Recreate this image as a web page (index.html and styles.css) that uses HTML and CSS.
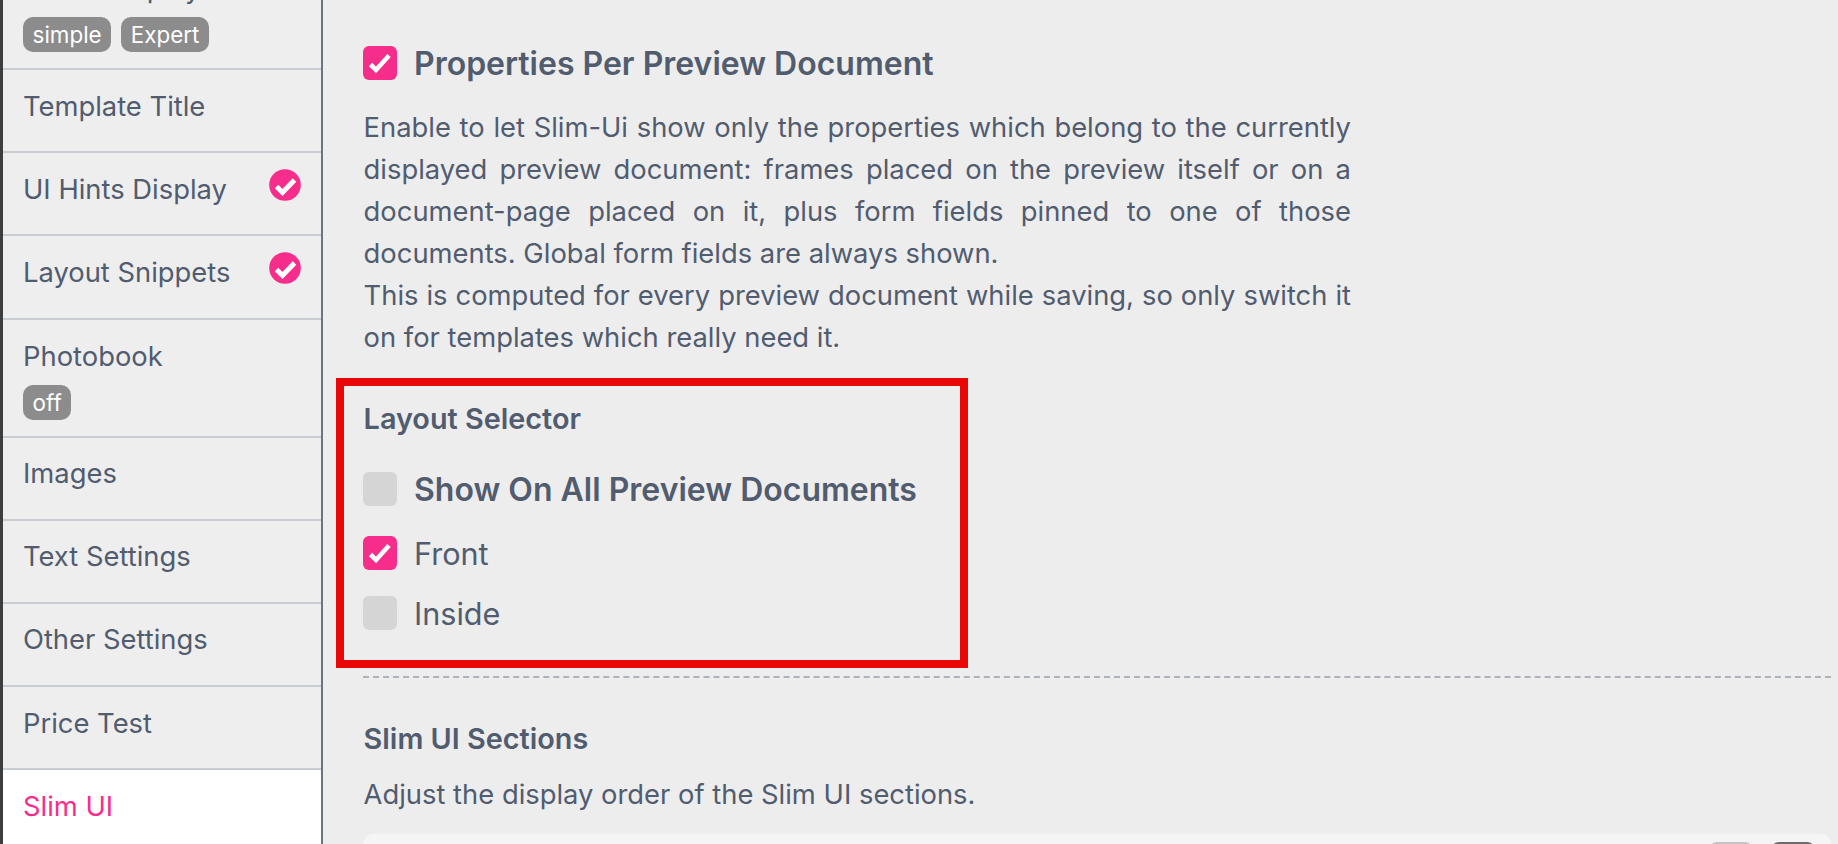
FILE: index.html
```html
<!DOCTYPE html>
<html lang="en">
<head>
<meta charset="utf-8">
<title>Slim UI</title>
<link rel="stylesheet" href="styles.css">
</head>
<body>
<div class="app">
  <nav class="sidebar">
    <div class="item tall"><div class="item-label">Editor Display</div><div class="tags"><span class="tag">simple</span><span class="tag">Expert</span></div></div>
    <div class="item"><div class="item-label">Template Title</div></div>
    <div class="item"><div class="item-label">UI Hints Display</div><svg class="done" viewBox="0 0 32 32"><circle cx="16" cy="16" r="15.8" fill="#f72d8c"/><path d="M7.5 17.5l6 6L25.5 11" fill="none" stroke="#fff" stroke-width="5"/></svg></div>
    <div class="item"><div class="item-label">Layout Snippets</div><svg class="done" viewBox="0 0 32 32"><circle cx="16" cy="16" r="15.8" fill="#f72d8c"/><path d="M7.5 17.5l6 6L25.5 11" fill="none" stroke="#fff" stroke-width="5"/></svg></div>
    <div class="item tall"><div class="item-label">Photobook</div><div class="tags"><span class="tag">off</span></div></div>
    <div class="item"><div class="item-label">Images</div></div>
    <div class="item"><div class="item-label">Text Settings</div></div>
    <div class="item"><div class="item-label">Other Settings</div></div>
    <div class="item"><div class="item-label">Price Test</div></div>
    <div class="item active"><div class="item-label">Slim UI</div></div>
  </nav>
  <main class="content">
    <label class="check title first"><span class="box on"><svg viewBox="0 0 34 34"><path d="M7.5 18.5l5.5 5.5L26 9.5" fill="none" stroke="#fff" stroke-width="4.6"/></svg></span>Properties Per Preview Document</label>
    <p class="desc">Enable to let Slim-Ui show only the properties which belong to the currently displayed preview document: frames placed on the preview itself or on a document-page placed on it, plus form fields pinned to one of those documents. Global form fields are always shown.<br>This is computed for every preview document while saving, so only switch it on for templates which really need it.</p>
    <section class="selector">
      <h3 class="sub">Layout Selector</h3>
      <label class="check title all"><span class="box"></span>Show On All Preview Documents</label>
      <label class="check option front"><span class="box on"><svg viewBox="0 0 34 34"><path d="M7.5 18.5l5.5 5.5L26 9.5" fill="none" stroke="#fff" stroke-width="4.6"/></svg></span>Front</label>
      <label class="check option inside"><span class="box"></span>Inside</label>
      <div class="annotation"></div>
    </section>
    <hr class="rule">
    <h3 class="sub sections">Slim UI Sections</h3>
    <p class="hint">Adjust the display order of the Slim UI sections.</p>
    <div class="card"><span class="btn light"></span><span class="btn dark"></span></div>
  </main>
</div>
</body>
</html>
```
FILE: styles.css
```css
html, body { margin: 0; height: 100%; }
body { background: #ededed; color: #515c6f; font-family: Inter, "Liberation Sans", sans-serif; font-size: 27.36px; overflow: hidden; }
.app { display: flex; height: 844px; overflow: hidden; }
.sidebar { box-sizing: border-box; width: 323px; flex: none; height: 844px; border-left: 3px solid #3e3e3e; border-right: 2px solid #6b7482; background: #eeeeee; }
.item { box-sizing: border-box; height: 83.2px; padding: 17.5px 20px 0; border-bottom: 2px solid #c8ccd3; display: flex; justify-content: space-between; align-items: flex-start; line-height: 36px; }
.item.tall { height: 118px; flex-wrap: wrap; align-content: flex-start; padding-top: 18px; }
.item:first-child { margin-top: -48px; }
.item-label { flex: none; }
.tall .item-label { width: 100%; }
.item.active { background: #fff; color: #f72d8c; border-bottom: 0; }
.done { width: 32px; height: 32px; flex: none; margin-top: -1.5px; }
.tags { display: flex; gap: 10px; margin-top: 11px; }
.tag { height: 35px; line-height: 35px; padding: 0 9.6px; border-radius: 10px; background: #8c8c8c; color: #fff; font-size: 22.4px; }
.content { flex: 1; min-width: 0; padding: 46px 7px 0 40px; }
.check { display: flex; align-items: center; gap: 17px; height: 34px; }
.check.title { font-weight: 600; font-size: 32px; }
.check.option { font-size: 30.6px; }
.box { box-sizing: border-box; flex: none; width: 34px; height: 34px; border-radius: 6px; background: #d5d5d5; display: block; }
.box svg { display: block; width: 34px; height: 34px; }
.box.on { background: #f72d8c; }
.desc { width: 987.4px; margin: 26px 0 0 0.6px; line-height: 42px; text-align: justify; }
.selector { position: relative; padding-top: 43px; }
.sub { margin: 0 0 0 0.6px; font-size: 28.8px; font-weight: 600; line-height: 36px; }
.all { margin-top: 35px; }
.front { margin-top: 30px; }
.inside { margin-top: 26px; }
.annotation { position: absolute; left: -27px; top: 20px; width: 632px; height: 290px; box-sizing: border-box; border: 8px solid #e80808; }
.rule { margin: 46px 0 0; border: 0; border-top: 2px dashed #aeb2bb; }
.sub.sections { margin-top: 43px; }
.hint { margin: 19px 0 0 0.6px; line-height: 36px; }
.card { margin-top: 22px; height: 120px; border-radius: 10px; background: #f5f5f5; display: flex; justify-content: flex-end; gap: 18px; padding: 8px 16px 0 0; }
.btn { width: 44px; height: 44px; border-radius: 8px; }
.btn.light { background: #c4c4c4; }
.btn.dark { background: #6b6b6b; }
```
